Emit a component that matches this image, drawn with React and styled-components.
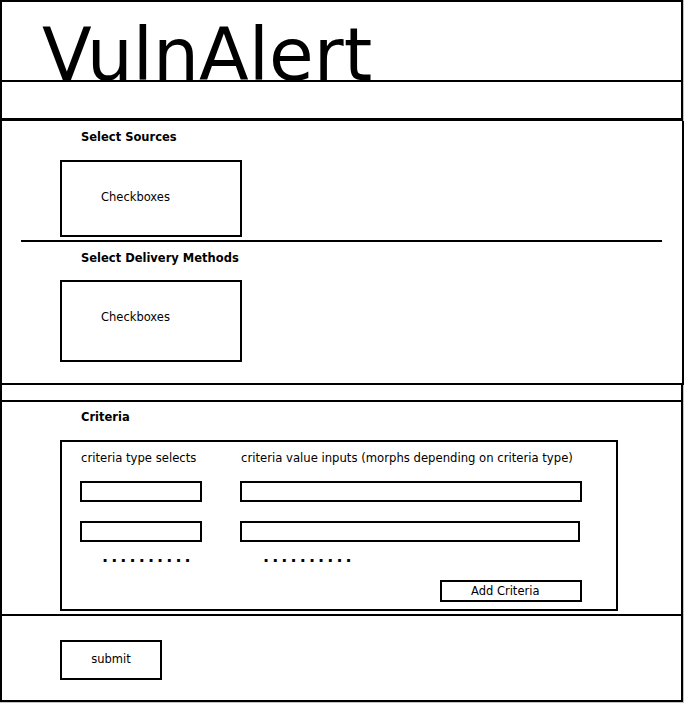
import React from "react";
import styled, { createGlobalStyle } from "styled-components";

const Global = createGlobalStyle`
  html, body { margin: 0; padding: 0; background: #c4c4c4; }
  body { font-family: "DejaVu Sans", "Liberation Sans", sans-serif; color: #000; }
  * { box-sizing: border-box; }
`;

const Frame = styled.div`
  width: 683px;
  height: 702px;
  border: 2px solid #000;
  background: #fff;
  display: flex;
  flex-direction: column;
`;

const Header = styled.header`
  flex: none;
  height: 80px;
  border-bottom: 2px solid #000;
  padding: 17px 0 0 40px;
  overflow: hidden;
`;

const Title = styled.h1`
  margin: 0;
  font-family: "DejaVu Sans", sans-serif;
  font-weight: 400;
  font-size: 72.7px;
  line-height: 72px;
  white-space: nowrap;
`;

const Nav = styled.nav`
  flex: none;
  height: 39px;
  border-bottom: 3px solid #000;
`;

const Section = styled.section`
  flex: ${(p) => (p.$grow ? "1" : "none")};
  height: ${(p) => (p.$h ? `${p.$h}px` : "auto")};
  border-bottom: ${(p) => (p.$last ? "none" : "2px solid #000")};
  margin-right: ${(p) => (p.$wide ? "-3px" : "0")};
  border-right: ${(p) => (p.$wide ? "2px solid #000" : "none")};
  background: #fff;
  padding: ${(p) => p.$pad || "0"};
`;

const Group = styled.div`
  padding: 9px 0 0 58px;
`;

const Label = styled.div`
  margin-left: 21px;
  font-weight: 700;
  font-size: 11.5px;
  line-height: 14px;
  white-space: nowrap;
`;

const CheckBox = styled.div`
  margin-top: ${(p) => p.$mt}px;
  width: 182px;
  height: ${(p) => p.$h}px;
  border: 2px solid #000;
  padding: 29px 0 0 39px;
  font-size: 11.5px;
  line-height: 13px;
`;

const Separator = styled.hr`
  margin: 3px 20px 0 19px;
  height: 2px;
  border: none;
  background: #000;
`;

const CriteriaBox = styled.div`
  margin-top: 16px;
  width: 558px;
  height: 171px;
  border: 2px solid #000;
  padding: 10px 0 0 18px;
`;

const Grid = styled.div`
  display: grid;
  grid-template-columns: 160px auto;
  align-items: start;
`;

const ColHead = styled.div`
  padding-left: 1px;
  font-size: 11.65px;
  line-height: 13px;
  white-space: nowrap;
`;

const Field = styled.input`
  display: block;
  width: ${(p) => p.$w}px;
  height: 21px;
  margin: ${(p) => p.$mt}px 0 0 0;
  border: 2px solid #000;
  border-radius: 0;
  padding: 0;
  background: #fff;
  outline: none;
`;

const Dots = styled.div`
  margin: 7px 0 0 ${(p) => p.$ml}px;
  font-weight: 700;
  font-size: 16px;
  line-height: 16px;
  letter-spacing: 3.1px;
  white-space: nowrap;
`;

const AddButton = styled.button`
  display: block;
  margin: 15px 0 0 360px;
  width: 142px;
  height: 22px;
  border: 2px solid #000;
  border-radius: 0;
  background: #fff;
  padding: 0 0 1px 29px;
  text-align: left;
  font-family: "DejaVu Sans", sans-serif;
  font-size: 11.5px;
  line-height: 14px;
  color: #000;
`;

const SubmitButton = styled.button`
  display: block;
  width: 102px;
  height: 40px;
  border: 2px solid #000;
  border-radius: 0;
  background: #fff;
  padding: 0 0 2px;
  font-family: "DejaVu Sans", sans-serif;
  font-size: 11.5px;
  color: #000;
`;

export default function App() {
  return (
    <>
      <Global />
      <Frame>
        <Header>
          <Title>VulnAlert</Title>
        </Header>
        <Nav />
        <Section $h={264} $wide>
          <Group>
            <Label>Select Sources</Label>
            <CheckBox $mt={16} $h={77}>Checkboxes</CheckBox>
          </Group>
          <Separator />
          <Group>
            <Label>Select Delivery Methods</Label>
            <CheckBox $mt={15} $h={82}>Checkboxes</CheckBox>
          </Group>
        </Section>
        <Section $h={17} />
        <Section $h={214} $pad="8px 0 0 58px">
          <Label>Criteria</Label>
          <CriteriaBox>
            <Grid>
              <ColHead>criteria type selects</ColHead>
              <ColHead>criteria value inputs (morphs depending on criteria type)</ColHead>
              <Field readOnly $w={122} $mt={16} />
              <Field readOnly $w={342} $mt={16} />
              <Field readOnly $w={122} $mt={19} />
              <Field readOnly $w={340} $mt={19} />
              <Dots $ml={22}>..........</Dots>
              <Dots $ml={23}>..........</Dots>
            </Grid>
            <AddButton type="button">Add Criteria</AddButton>
          </CriteriaBox>
        </Section>
        <Section $grow $last $pad="24px 0 0 58px">
          <SubmitButton type="button">submit</SubmitButton>
        </Section>
      </Frame>
    </>
  );
}
